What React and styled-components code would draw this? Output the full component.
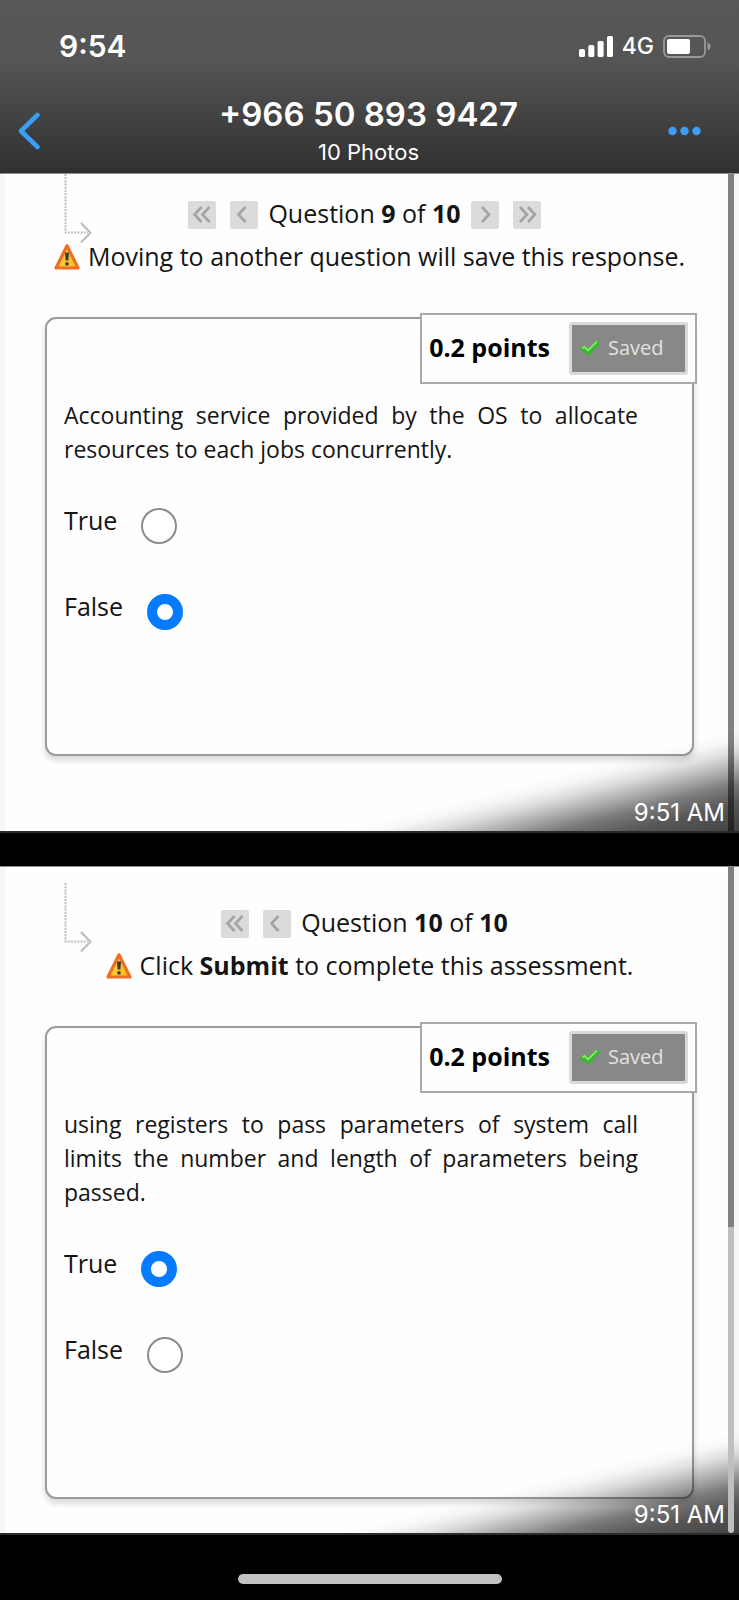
import React, { useState } from "react";
import styled, { createGlobalStyle } from "styled-components";

const ui = `"Inter", "Liberation Sans", sans-serif`;
const doc = `"Open Sans", "Noto Sans", sans-serif`;

const GlobalStyle = createGlobalStyle`
  *, *::before, *::after { box-sizing: border-box; }
  body { margin: 0; background: #000; }
  button { font: inherit; border: 0; padding: 0; background: none; cursor: pointer; }
`;

const Screen = styled.div`
  display: flex;
  flex-direction: column;
  min-height: 100vh;
  background: #000;
  font-family: ${ui};
`;

const TopBar = styled.header`
  height: 173px;
  background: linear-gradient(#575757 0%, #555 35%, #303030 100%);
  color: #fff;
`;

const StatusBar = styled.div`
  display: flex;
  align-items: center;
  justify-content: space-between;
  height: 92px;
  padding: 0 28px 0 59px;
`;

const Clock = styled.time`
  font-size: 30px;
  font-weight: 600;
`;

const Indicators = styled.div`
  display: flex;
  align-items: center;
  gap: 9px;
  font-size: 23px;
  font-weight: 500;
`;

const TitleBar = styled.div`
  display: flex;
  align-items: center;
  justify-content: space-between;
  height: 77px;
  padding: 0 38px 0 18px;
`;

const BarButton = styled.button`
  display: flex;
  align-items: center;
  justify-content: ${(p) => p.$side};
  width: ${(p) => (p.$side === "flex-end" ? 36 : 54)}px;
  height: 44px;
`;

const Heading = styled.div`
  display: flex;
  flex-direction: column;
  align-items: center;
`;

const Title = styled.h1`
  margin: 0;
  font-size: 33px;
  line-height: 42px;
  font-weight: 600;
`;

const Subtitle = styled.p`
  margin: 0;
  font-size: 22px;
  line-height: 34px;
`;

const Gallery = styled.main`
  display: flex;
  flex-direction: column;
  gap: 33px;
`;

const Photo = styled.article`
  position: relative;
  display: flex;
  background: #fefefe;
  border-top: 1px solid #8c8c8c;
  border-bottom: 2px solid #2b2b2b;
  color: #141414;
  font-family: ${doc};
`;

const Edge = styled.div`
  flex: 0 0 5px;
  background: #f6f6f6;
`;

const Sheet = styled.div`
  flex: 1;
  min-width: 0;
  padding: ${(p) => p.$top}px 34px ${(p) => p.$bottom}px 40px;
`;

const ScrollTrack = styled.div`
  display: flex;
  flex-direction: column;
  flex: 0 0 6px;
`;

const ScrollPart = styled.div`
  flex: ${(p) => p.$grow};
  background: #808080;
`;

const ScrollThumb = styled(ScrollPart)`
  position: relative;
  z-index: 1;
  border-radius: 0 0 3px 3px;
  background: #bfbfbf;
`;

const Navigator = styled.div`
  display: grid;
  grid-template-columns: 28px 1fr 38px;
  align-items: end;
  padding: 0 19px;
  height: 68px;
`;

const Pager = styled.nav`
  display: flex;
  align-items: center;
  justify-content: center;
  height: 56px;
  font-size: 25px;
  line-height: 28px;
`;

const Steps = styled.div`
  display: flex;
  gap: 14px;
`;

const Position = styled.span`
  margin-left: 10px;
  padding-bottom: 4px;
  white-space: nowrap;
  & + ${Steps} {
    margin-left: 10px;
  }
`;

const Step = styled.button`
  display: grid;
  place-items: center;
  width: 28px;
  height: 28px;
  border-radius: 2px;
  background: #dbdbdb;
`;

const Notice = styled.p`
  display: flex;
  justify-content: center;
  gap: 8px;
  margin: 0 0 47px;
  font-size: 25px;
  line-height: 28px;
`;

const Card = styled.section`
  position: relative;
  padding: 79px 54px 124px 17px;
  border: 2px solid #9b9b9b;
  border-radius: 11px;
  background: #fefefe;
  box-shadow: 0 4px 6px rgba(0, 0, 0, 0.16);
`;

const Score = styled.div`
  position: absolute;
  top: -6px;
  right: -5px;
  display: flex;
  align-items: center;
  gap: 19px;
  height: 71px;
  padding: 0 7px;
  border: 2px solid #a9a9a9;
  background: #fefefe;
  color: #000;
  font-size: 25px;
  line-height: 28px;
  font-weight: 700;
`;

const Points = styled.span`
  padding-bottom: 4px;
`;

const SavedButton = styled.button`
  display: flex;
  align-items: center;
  gap: 8px;
  width: 119px;
  height: 53px;
  padding: 0 0 2px 8px;
  border: 3px solid #d9d9d9;
  border-radius: 3px;
  background: #888;
  color: #e2e2e2;
  font-size: 20px;
  font-weight: 400;
`;

const Prompt = styled.p`
  margin: 0 0 37px;
  font-size: 23px;
  line-height: 34px;
  text-align: justify;
`;

const Answers = styled.div`
  display: flex;
  flex-direction: column;
  align-items: flex-start;
  gap: 45px;
`;

const Answer = styled.label`
  display: flex;
  align-items: flex-start;
  gap: 24px;
  font-size: 25px;
  line-height: 34px;
`;

const Radio = styled.input.attrs({ type: "radio" })`
  appearance: none;
  width: 36px;
  height: 36px;
  margin: 5px 0 0;
  border: 2px solid #8b8b8b;
  border-radius: 50%;
  background: #fff;
  &:checked {
    border: 10px solid #067bff;
  }
`;

const Shade = styled.div`
  position: absolute;
  right: 0;
  bottom: 0;
  display: flex;
  align-items: flex-end;
  justify-content: flex-end;
  width: 54%;
  height: 102px;
  padding: 0 14px 4px;
  background: linear-gradient(
    to bottom right,
    rgba(0, 0, 0, 0) 50%,
    rgba(0, 0, 0, 0.03) 55%,
    rgba(0, 0, 0, 0.12) 61%,
    rgba(0, 0, 0, 0.34) 70%,
    rgba(0, 0, 0, 0.52) 77%,
    rgba(0, 0, 0, 0.65) 86%,
    rgba(0, 0, 0, 0.74) 100%
  );
  color: #fff;
  font-family: ${ui};
  font-size: 24px;
  line-height: 28px;
  pointer-events: none;
`;

const Footer = styled.footer`
  display: flex;
  justify-content: center;
  padding: 39px 0 16px;
`;

const HomeIndicator = styled.div`
  width: 264px;
  height: 10px;
  border-radius: 5px;
  background: #c1c1c1;
`;

const Signal = () => (
  <svg width="34" height="21" viewBox="0 0 34 21" fill="#fff" aria-hidden="true">
    <rect x="0" y="13" width="6" height="8" rx="1.6" />
    <rect x="9.3" y="9" width="6" height="12" rx="1.6" />
    <rect x="18.6" y="5" width="6" height="16" rx="1.6" />
    <rect x="28" y="0" width="6" height="21" rx="1.6" />
  </svg>
);

const Battery = () => (
  <svg width="48" height="23" viewBox="0 0 48 23" aria-hidden="true">
    <rect x="1" y="1" width="41" height="21" rx="5" fill="none" stroke="#999" strokeWidth="1.8" />
    <rect x="4" y="4" width="23" height="15" rx="2" fill="#fff" />
    <path d="M44.500 7.500c4 1.200 4 6.800 0 8z" fill="#999" />
  </svg>
);

const BackIcon = () => (
  <svg width="24" height="38" viewBox="0 0 24 38" fill="none" stroke="#3b9ef8" strokeWidth="4.600" strokeLinecap="round" strokeLinejoin="round" aria-hidden="true">
    <path d="M19.500 3 3 19l16.500 16" />
  </svg>
);

const MoreIcon = () => (
  <svg width="33" height="10" viewBox="0 0 33 10" fill="#3b9ef8" aria-hidden="true">
    <circle cx="4.500" cy="5" r="4.200" />
    <circle cx="16.500" cy="5" r="4.200" />
    <circle cx="28.500" cy="5" r="4.200" />
  </svg>
);

const TurnArrow = () => (
  <svg width="28" height="69" viewBox="0 0 28 69" fill="none" stroke="#bdbdbd" aria-hidden="true">
    <path d="M1.500 0v58.500H24" strokeWidth="2" strokeDasharray="2 1.200" />
    <path d="m17 49 9.500 9.700-9.500 9.700" strokeWidth="2.200" />
  </svg>
);

const chevrons = {
  first: "M13.500 6 6.500 13.500 13.500 21M21.500 6l-7 7.500L21.500 21",
  previous: "M15.500 6 8.500 13.500 15.500 21",
  next: "m11 6 7 7.500L11 21",
  last: "m7 6 7 7.500L7 21M15 6l7 7.500L15 21",
};

const StepButton = ({ kind }) => (
  <Step type="button" aria-label={`${kind} question`}>
    <svg width="28" height="28" viewBox="0 0 28 28" fill="none" stroke="#a3a3a3" strokeWidth="2.600" aria-hidden="true">
      <path d={chevrons[kind]} />
    </svg>
  </Step>
);

const WarningIcon = ({ id }) => (
  <svg width="26" height="28" viewBox="0 0 26 28" aria-hidden="true">
    <defs>
      <linearGradient id={id} x1="0" y1="0" x2="1" y2="1">
        <stop offset="0" stopColor="#ffe9a0" />
        <stop offset="0.500" stopColor="#fdc836" />
        <stop offset="1" stopColor="#f9bb0c" />
      </linearGradient>
    </defs>
    <path d="M13 3.800 24 26H2z" fill={`url(#${id})`} stroke="#f26d24" strokeWidth="3.200" strokeLinejoin="round" />
    <path d="M11 10.500h4l-.6 8h-2.800z" fill="#3a3a33" />
    <rect x="11.400" y="20.200" width="3.200" height="3.200" rx="1" fill="#3a3a33" />
  </svg>
);

const CheckIcon = () => (
  <svg width="20" height="18" viewBox="0 0 20 18" aria-hidden="true">
    <path d="m0 10 4-4 4 3.500L17 1l3 3L8.500 17z" fill="#35b829" />
    <path d="m2.500 9.500 1.800-1.700L8 11.500l9-9" fill="none" stroke="#83ea6c" strokeWidth="1.800" />
  </svg>
);

function Question({ number, total, isLast, notice, points, prompt, initial, top, bottom, children }) {
  const [answer, setAnswer] = useState(initial);
  return (
    <Photo>
      <Edge />
      <Sheet $top={top} $bottom={bottom}>
        <Navigator>
          <TurnArrow />
          <Pager aria-label="Questions">
            <Steps>
              <StepButton kind="first" />
              <StepButton kind="previous" />
            </Steps>
            <Position>
              Question <b>{number}</b> of <b>{total}</b>
            </Position>
            {!isLast && (
              <Steps>
                <StepButton kind="next" />
                <StepButton kind="last" />
              </Steps>
            )}
          </Pager>
        </Navigator>
        <Notice>
          <WarningIcon id={`warning-${number}`} />
          <span>{notice}</span>
        </Notice>
        <Card>
          <Score>
            <Points>{points}</Points>
            <SavedButton type="button">
              <CheckIcon />
              Saved
            </SavedButton>
          </Score>
          <Prompt>{prompt}</Prompt>
          <Answers role="radiogroup" aria-label={`Question ${number}`}>
            {["True", "False"].map((option) => (
              <Answer key={option}>
                {option}
                <Radio
                  name={`question-${number}`}
                  value={option}
                  checked={answer === option}
                  onChange={() => setAnswer(option)}
                />
              </Answer>
            ))}
          </Answers>
        </Card>
      </Sheet>
      <ScrollTrack>{children}</ScrollTrack>
      <Edge />
      <Shade>
        <time>9:51 AM</time>
      </Shade>
    </Photo>
  );
}

export default function App() {
  return (
    <Screen>
      <GlobalStyle />
      <TopBar>
        <StatusBar>
          <Clock>9:54</Clock>
          <Indicators>
            <Signal />
            4G
            <Battery />
          </Indicators>
        </StatusBar>
        <TitleBar>
          <BarButton type="button" aria-label="Back" $side="flex-start">
            <BackIcon />
          </BarButton>
          <Heading>
            <Title>+966 50 893 9427</Title>
            <Subtitle>10 Photos</Subtitle>
          </Heading>
          <BarButton type="button" aria-label="More" $side="flex-end">
            <MoreIcon />
          </BarButton>
        </TitleBar>
      </TopBar>
      <Gallery>
        <Question
          number={9}
          total={10}
          notice="Moving to another question will save this response."
          points="0.2 points"
          prompt="Accounting service provided by the OS to allocate resources to each jobs concurrently."
          initial="False"
          top={0}
          bottom={75}
        >
          <ScrollPart $grow={1} />
        </Question>
        <Question
          number={10}
          total={10}
          isLast
          notice={
            <>
              Click <b>Submit</b> to complete this assessment.
            </>
          }
          points="0.2 points"
          prompt="using registers to pass parameters of system call limits the number and length of parameters being passed."
          initial="True"
          top={16}
          bottom={34}
        >
          <ScrollPart $grow={54} />
          <ScrollThumb $grow={46} />
        </Question>
      </Gallery>
      <Footer>
        <HomeIndicator />
      </Footer>
    </Screen>
  );
}
